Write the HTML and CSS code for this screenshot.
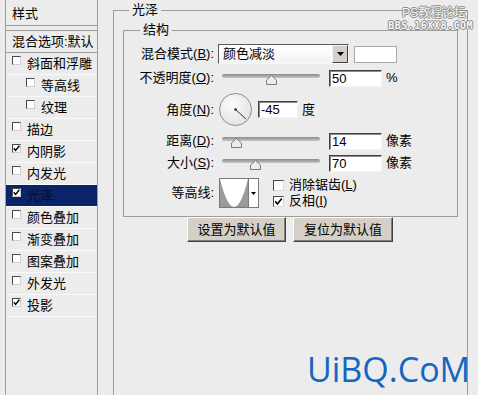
FILE: index.html
```html
<!DOCTYPE html>
<html lang="zh-CN">
<head>
  <meta charset="UTF-8">
  <title>图层样式 - 光泽</title>
  <link rel="stylesheet" href="styles.css">
</head>
<body>
  <div class="styles-list">
    <div class="list-head">样式</div>
    <div class="list-blend">混合选项:默认</div>
    <ul class="effects">
      <li><span class="box"></span>斜面和浮雕</li>
      <li class="sub"><span class="box"></span>等高线</li>
      <li class="sub"><span class="box"></span>纹理</li>
      <li><span class="box"></span>描边</li>
      <li><span class="box"><svg viewBox="0 0 7 7"><polyline points="0.8,3.2 2.6,5.4 6.4,0.8"/></svg></span>内阴影</li>
      <li><span class="box"></span>内发光</li>
      <li class="selected"><span class="box"><svg viewBox="0 0 7 7"><polyline points="0.8,3.2 2.6,5.4 6.4,0.8"/></svg></span>光泽</li>
      <li><span class="box"></span>颜色叠加</li>
      <li><span class="box"></span>渐变叠加</li>
      <li><span class="box"></span>图案叠加</li>
      <li><span class="box"></span>外发光</li>
      <li><span class="box"><svg viewBox="0 0 7 7"><polyline points="0.8,3.2 2.6,5.4 6.4,0.8"/></svg></span>投影</li>
    </ul>
  </div>

  <main class="settings">
    <fieldset class="group outer">
      <legend>光泽</legend>
      <fieldset class="group inner">
        <legend>结构</legend>

        <div class="row row-mode">
          <span class="lbl">混合模式(<u>B</u>):</span>
          <div class="select">
            <span class="select-text">颜色减淡</span>
            <span class="select-btn"><svg width="7" height="4" viewBox="0 0 7 4"><polygon points="0,0 7,0 3.5,4"/></svg></span>
          </div>
          <span class="swatch"></span>
        </div>

        <div class="row row-opacity">
          <span class="lbl">不透明度(<u>O</u>):</span>
          <div class="slider">
            <div class="track"></div>
            <svg class="thumb" style="left: 50%" viewBox="0 0 11 10"><polygon points="5.5,0.5 10.5,5 10.5,9.5 0.5,9.5 0.5,5"/></svg>
          </div>
          <input class="num" type="text" value="50">
          <span class="unit">%</span>
        </div>

        <div class="row row-angle">
          <span class="lbl">角度(<u>N</u>):</span>
          <svg class="dial" width="33" height="33" viewBox="0 0 33 33">
            <defs>
              <radialGradient id="dialFill" cx="40%" cy="35%" r="70%">
                <stop offset="0" stop-color="#fbfbfb"/>
                <stop offset="1" stop-color="#e2e2e2"/>
              </radialGradient>
            </defs>
            <circle cx="16.5" cy="16.5" r="16" fill="url(#dialFill)" stroke="#8c8c8c"/>
            <line x1="16.5" y1="16.5" x2="27" y2="26" stroke="#333" stroke-width="1"/>
            <circle cx="16.5" cy="16.5" r="1.2" fill="#222"/>
          </svg>
          <input class="num num-angle" type="text" value="-45">
          <span class="unit">度</span>
        </div>

        <div class="row row-distance">
          <span class="lbl">距离(<u>D</u>):</span>
          <div class="slider">
            <div class="track"></div>
            <svg class="thumb" style="left: 14%" viewBox="0 0 11 10"><polygon points="5.5,0.5 10.5,5 10.5,9.5 0.5,9.5 0.5,5"/></svg>
          </div>
          <input class="num" type="text" value="14">
          <span class="unit">像素</span>
        </div>

        <div class="row row-size">
          <span class="lbl">大小(<u>S</u>):</span>
          <div class="slider">
            <div class="track"></div>
            <svg class="thumb" style="left: 34%" viewBox="0 0 11 10"><polygon points="5.5,0.5 10.5,5 10.5,9.5 0.5,9.5 0.5,5"/></svg>
          </div>
          <input class="num" type="text" value="70">
          <span class="unit">像素</span>
        </div>

        <div class="row row-contour">
          <span class="lbl">等高线:</span>
          <div class="contour">
            <svg class="contour-preview" width="28" height="28" viewBox="0 0 28 28">
              <rect width="28" height="28" fill="#9a9a9a"/>
              <path d="M0,0 Q14,56 28,0 Z" fill="#fff"/>
            </svg>
            <span class="contour-btn"><svg width="5" height="3" viewBox="0 0 5 3"><polygon points="0,0 5,0 2.5,3"/></svg></span>
          </div>
          <div class="checks">
            <div class="check"><span class="cbox"></span>消除锯齿(<u>L</u>)</div>
            <div class="check"><span class="cbox"><svg viewBox="0 0 9 9"><polyline points="1.2,4.2 3.4,7 7.8,1.4"/></svg></span>反相(<u>I</u>)</div>
          </div>
        </div>
      </fieldset>

      <div class="actions">
        <button type="button">设置为默认值</button>
        <button type="button" class="wide">复位为默认值</button>
      </div>
    </fieldset>
  </main>

  <div class="watermark">
    <div class="wm-name">PS教程论坛</div>
    <div class="wm-url">BBS.16XX8.COM</div>
  </div>
  <div class="brand">UiBQ.CoM</div>
</body>
</html>
```

FILE: styles.css
```css
body {
  margin: 0;
  width: 478px;
  height: 395px;
  overflow: hidden;
  position: relative;
  display: flex;
  background-color: #ececec;
  color: #000;
  font-family: "Liberation Sans", "Noto Sans CJK SC", sans-serif;
  font-size: 13px;
  line-height: 16px;
}

u {
  text-decoration: underline;
  text-underline-offset: 1px;
}

/* left column: effect list */

.styles-list {
  flex: none;
  width: 91px;
  margin-left: 5px;
  border-left: 1px solid #9c9c9c;
  border-right: 1px solid #9c9c9c;
}

.list-head {
  height: 25px;
  line-height: 28px;
  padding-left: 6px;
  border-bottom: 1px solid #9c9c9c;
}

.list-blend {
  height: 21px;
  line-height: 21px;
  margin-top: 4px;
  padding-left: 6px;
  border-top: 1px solid #9c9c9c;
  border-bottom: 1px solid #9c9c9c;
}

.effects {
  list-style: none;
  margin: 0;
  padding: 0;
}

.effects li {
  display: flex;
  height: 21px;
  line-height: 22px;
  padding-left: 6px;
  border-bottom: 1px solid #fafafa;
}

.effects li.sub {
  padding-left: 20px;
}

.effects li.selected {
  background-color: #0a246a;
  color: #030b2e;
}

.box {
  flex: none;
  box-sizing: border-box;
  width: 9px;
  height: 9px;
  margin: 3px 6px 0 0;
  background-color: #fff;
  border: 1px solid;
  border-color: #4a4a4a #cfcfcf #cfcfcf #4a4a4a;
}

.box svg {
  display: block;
  width: 7px;
  height: 7px;
  fill: none;
  stroke: #000;
  stroke-width: 1.4;
}

/* right column: settings */

.settings {
  flex: 1;
  padding-left: 15px;
}

.group {
  margin: 0;
  padding: 0;
  min-width: 0;
  border: 1px solid #9c9c9c;
}

.group > legend {
  padding: 0 3px;
  line-height: 16px;
}

.outer {
  box-sizing: border-box;
  width: 355px;
  height: 393px;
  margin-top: 2px;
  padding: 0 9px;
  border-bottom: none;
}

.outer > legend {
  margin-left: 6px;
}

.inner {
  margin-top: 4px;
  padding: 6px 0 8px;
}

.inner > legend {
  margin-left: 16px;
}

.row {
  display: flex;
  align-items: center;
}

.lbl {
  flex: none;
  width: 90px;
  text-align: right;
}

.row-mode { height: 20px; }
.row-opacity { height: 18px; margin-top: 5px; }
.row-angle { height: 33px; margin-top: 6px; }
.row-distance { height: 18px; margin-top: 6px; }
.row-size { height: 18px; margin-top: 4px; }
.row-contour { height: 30px; margin-top: 6px; }

.select {
  display: flex;
  box-sizing: border-box;
  width: 131px;
  height: 20px;
  margin-left: 4px;
  border: 1px solid;
  border-color: #5a5a5a #f8f8f8 #f8f8f8 #5a5a5a;
  background: linear-gradient(#ffffff, #f3f3f3);
}

.select-text {
  flex: 1;
  padding-left: 4px;
  line-height: 18px;
}

.select-btn {
  display: flex;
  align-items: center;
  justify-content: center;
  box-sizing: border-box;
  width: 16px;
  background-color: #d4d0c8;
  border: 1px solid;
  border-color: #f4f4f4 #404040 #404040 #f4f4f4;
}

.swatch {
  box-sizing: border-box;
  width: 43px;
  height: 17px;
  margin-left: 5px;
  background-color: #fff;
  border: 1px solid #a8a8a8;
}

.slider {
  position: relative;
  flex: none;
  width: 98px;
  height: 18px;
  margin-left: 8px;
}

.track {
  height: 4px;
  margin-top: 5px;
  border-radius: 2px;
  background: linear-gradient(#8a8a8a, #c6c6c6);
}

.thumb {
  position: absolute;
  top: 6px;
  width: 11px;
  height: 10px;
  margin-left: -5px;
  fill: #ececec;
  stroke: #7c7c7c;
}

.num {
  flex: none;
  box-sizing: border-box;
  width: 53px;
  height: 17px;
  margin: 0 0 0 9px;
  padding: 0 2px;
  font: inherit;
  line-height: 15px;
  color: #000;
  background-color: #fff;
  border: 1px solid;
  border-color: #404040 #f4f4f4 #f4f4f4 #404040;
  box-shadow: inset 1px 1px 0 #8c8c8c;
  outline: none;
}

.num-angle {
  width: 40px;
  margin-left: 6px;
}

.unit {
  margin-left: 4px;
}

.dial {
  flex: none;
  margin-left: 5px;
}

.contour {
  display: flex;
  box-sizing: border-box;
  width: 40px;
  height: 30px;
  margin-left: 5px;
  background-color: #fff;
  border: 1px solid #7a7a7a;
}

.contour-preview {
  display: block;
}

.contour-btn {
  display: flex;
  flex: 1;
  align-items: center;
  justify-content: center;
  border-left: 1px solid #7a7a7a;
}

.checks {
  margin-left: 14px;
}

.check {
  display: flex;
  align-items: center;
  height: 16px;
}

.cbox {
  box-sizing: border-box;
  width: 11px;
  height: 11px;
  margin-right: 5px;
  background-color: #fff;
  border: 1px solid;
  border-color: #4a4a4a #d8d8d8 #d8d8d8 #4a4a4a;
}

.cbox svg {
  display: block;
  width: 9px;
  height: 9px;
  fill: none;
  stroke: #000;
  stroke-width: 1.6;
}

.actions {
  display: flex;
  gap: 7px;
  margin: 0 0 0 64px;
}

button {
  box-sizing: border-box;
  width: 99px;
  height: 25px;
  padding: 0;
  font: inherit;
  color: #000;
  background-color: #d4d0c8;
  border: 1px solid;
  border-color: #fff #404040 #404040 #fff;
  box-shadow: inset -1px -1px 0 #808080;
}

button.wide {
  width: 100px;
}

/* overlays */

.watermark {
  position: absolute;
  top: 6px;
  right: 5px;
  text-align: right;
  color: #f6f6f6;
  text-shadow: 1px 0 #8a8a8a, -1px 0 #8a8a8a, 0 1px #8a8a8a, 0 -1px #8a8a8a;
}

.wm-name {
  font-size: 12px;
  line-height: 14px;
  padding-right: 7px;
}

.wm-url {
  font-family: "DejaVu Sans Mono", monospace;
  font-size: 10px;
  font-weight: bold;
  line-height: 12px;
  letter-spacing: 0.5px;
}

.brand {
  position: absolute;
  left: 307px;
  top: 349px;
  font-family: "Open Sans", sans-serif;
  font-size: 34px;
  line-height: 40px;
  color: #1565c2;
}
```
